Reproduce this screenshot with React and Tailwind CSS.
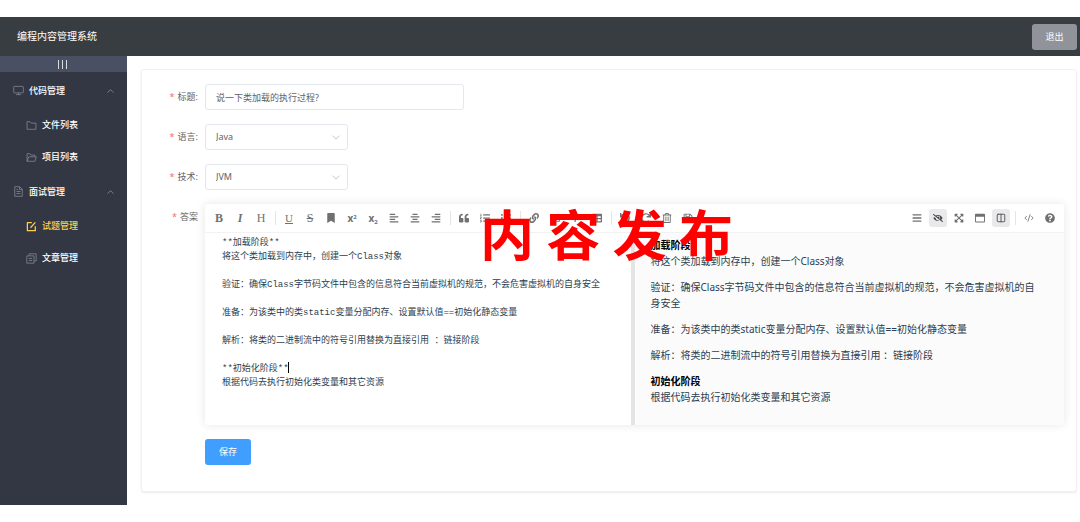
import { useState } from 'react';
import {
    FaBookmark, FaAlignLeft, FaAlignCenter, FaAlignRight, FaQuoteLeft, FaListOl, FaListUl, FaLink,
    FaRegImage, FaCode, FaTable, FaUndo, FaRedo, FaRegTrashAlt, FaRegSave, FaBars, FaEyeSlash,
    FaExpandArrowsAlt, FaRegWindowMaximize, FaQuestionCircle
} from 'react-icons/fa';
import { CodeXml, Columns2 } from 'lucide-react';

const ANSWER = `**加载阶段**
将这个类加载到内存中，创建一个Class对象

验证：确保Class字节码文件中包含的信息符合当前虚拟机的规范，不会危害虚拟机的自身安全

准备：为该类中的类static变量分配内存、设置默认值==初始化静态变量

解析：将类的二进制流中的符号引用替换为直接引用 ：链接阶段

**初始化阶段**
根据代码去执行初始化类变量和其它资源`;

const MENU_ICONS = {
    monitor: <><rect x="1" y="2" width="14" height="9.5" rx="1" /><path d="M8 11.5V14M4.5 14h7" /></>,
    folder: <path d="M1.5 2.5h4.3l1.7 2h7v9h-13z" />,
    folderOpen: <><path d="M1.5 13.5v-11h4.3l1.7 2h5.5V7" /><path d="M1.5 13.5 4 7h11l-2 6.5z" /></>,
    document: <><path d="M2.5 1h7.2L13.5 4.8V15h-11z" /><path d="M9.5 1v4h4M5 5h2.5M5 8h6M5 11h6" /></>,
    edit: <g strokeWidth="1.8"><path d="M8.5 2.5H2v11.5h11.5V7.5" /><path d="M6.5 9.8 13.6 2" /></g>,
    copy: <><path d="M4.5 4V1.2h10.3v10.3H12" /><path d="M1.2 4.2h10.5v10.6H1.2zM4 8h5M4 11h5" /></>
};

const MENU = [
    {
        title: '代码管理', icon: 'monitor',
        items: [{ label: '文件列表', icon: 'folder' }, { label: '项目列表', icon: 'folderOpen' }]
    },
    {
        title: '面试管理', icon: 'document',
        items: [{ label: '试题管理', icon: 'edit', active: true }, { label: '文章管理', icon: 'copy' }]
    }
];

// letter shaped tools are plain serif text
const Bold = () => <span className="text-[12px] font-bold">B</span>;
const Italic = () => <span className="text-[12px] font-bold italic">I</span>;
const Heading = () => <span className="text-[12px]">H</span>;
const Underline = () => <span className="text-[11px] underline">U</span>;
const Strike = () => <span className="text-[12px] line-through">S</span>;
const Sup = () => <span className="font-['Noto_Sans',sans-serif] text-[10px] font-bold">x<sup className="text-[6px]">2</sup></span>;
const Sub = () => <span className="font-['Noto_Sans',sans-serif] text-[10px] font-bold">x<sub className="text-[6px]">2</sub></span>;

const LEFT_TOOLS = [
    [['粗体', Bold], ['斜体', Italic], ['标题', Heading]],
    [['下划线', Underline], ['中划线', Strike], ['标记', FaBookmark], ['上角标', Sup], ['下角标', Sub],
        ['居左', FaAlignLeft], ['居中', FaAlignCenter], ['居右', FaAlignRight]],
    [['段落引用', FaQuoteLeft], ['有序列表', FaListOl], ['无序列表', FaListUl]],
    [['链接', FaLink], ['添加图片', FaRegImage], ['代码块', FaCode], ['表格', FaTable]],
    [['上一步', FaUndo], ['下一步', FaRedo], ['清空', FaRegTrashAlt], ['保存', FaRegSave]]
];

const RIGHT_TOOLS = [
    [['标题导航', FaBars], ['预览', FaEyeSlash, true], ['全屏编辑', FaExpandArrowsAlt], ['沉浸式阅读', FaRegWindowMaximize], ['双栏', Columns2, true]],
    [['查看html文本', CodeXml], ['帮助', FaQuestionCircle]]
];

const MenuIcon = ({ name, className }) => (
    <svg viewBox="0 0 16 16" fill="none" stroke="currentColor" strokeWidth="1.2" strokeLinejoin="round" className={`size-[11px] shrink-0 ${className}`}>
        {MENU_ICONS[name]}
    </svg>
);

const Chevron = ({ className }) => (
    <svg viewBox="0 0 10 6" fill="none" stroke="currentColor" strokeLinecap="round" strokeWidth="1.2" className={className}>
        <path d="M1 1l4 4 4-4" />
    </svg>
);

const Tools = ({ groups }) => (
    <div className="flex items-center gap-[3px] font-['Liberation_Serif',serif] leading-none">
        {groups.map((group, i) => (
            <div key={i} className="flex items-center gap-[3px]">
                {i > 0 && <span className="ml-[2px] mr-px h-[14px] w-px bg-[#e5e5e5]" />}
                {group.map(([label, ToolIcon, active]) => (
                    <button key={label} type="button" aria-label={label} className={`flex h-[18px] w-[18px] items-center justify-center rounded-[3px] ${active ? 'bg-[#e9e9eb] text-[#444]' : 'text-[#707070] hover:bg-[#e9e9eb]'}`}>
                        <ToolIcon size={10} />
                    </button>
                ))}
            </div>
        ))}
    </div>
);

const Field = ({ label, id, children }) => (
    <div className="flex">
        <label htmlFor={id} className="w-[50px] shrink-0 pr-[7px] text-right leading-[26px]">
            <span className="mr-[3px] text-[#f56c6c]">*</span>{label}
        </label>
        <div className="min-w-0 flex-1">{children}</div>
    </div>
);

const SelectBox = ({ id, options }) => (
    <div className="relative w-[143px]">
        <select id={id} className="block h-[26px] w-full appearance-none rounded-[3px] border border-[#e4e7ed] bg-white px-[10px] outline-none focus:border-[#409eff]">
            {options.map(o => <option key={o}>{o}</option>)}
        </select>
        <Chevron className="pointer-events-none absolute right-[8px] top-[11px] h-[5px] w-[8px] text-[#c0c4cc]" />
    </div>
);

const Sidebar = () => (
    <nav className="w-[127px] shrink-0 bg-[#333744] text-white">
        <button type="button" aria-label="折叠菜单" className="flex h-[16px] w-full items-center justify-center gap-[3px] bg-[#4a5064] pr-[3px]">
            <span className="h-[9px] w-px bg-white/80" />
            <span className="h-[9px] w-px bg-white/80" />
            <span className="h-[9px] w-px bg-white/80" />
        </button>
        {MENU.map(group => (
            <div key={group.title}>
                <button type="button" className="flex h-[37px] w-full items-center pl-[13px] pr-[13px]">
                    <MenuIcon name={group.icon} className="mr-[5px] text-[#80848e]" />
                    <span className="font-medium">{group.title}</span>
                    <Chevron className="ml-auto h-[4px] w-[7px] rotate-180 text-[#909399]" />
                </button>
                {group.items.map(item => (
                    <a key={item.label} href="#" className={`flex h-[32px] items-center pl-[26px] ${item.active ? 'text-[#ffd04b]' : 'text-white'}`}>
                        <MenuIcon name={item.icon} className={`mr-[5px] ${item.active ? 'text-[#ffd04b]' : 'text-[#80848e]'}`} />
                        <span className="font-medium">{item.label}</span>
                    </a>
                ))}
            </div>
        ))}
    </nav>
);

const Editor = () => {
    const [value, setValue] = useState(ANSWER);

    return (
        <div className="overflow-hidden rounded-[3px] bg-white shadow-[0_0_10px_rgba(0,0,0,0.1)]">
            <div className="flex h-[29px] items-center justify-between border-b border-[#f2f2f2] px-[5px]">
                <Tools groups={LEFT_TOOLS} />
                <Tools groups={RIGHT_TOOLS} />
            </div>
            <div className="flex min-h-[191px]">
                <div className="relative flex w-1/2 border-r-4 border-[#e4e4e4]">
                    <textarea id="answer" value={value} onChange={e => setValue(e.target.value)} spellCheck={false} className="w-full resize-none bg-white px-[17px] pt-[3px] font-['Liberation_Mono','Noto_Sans_CJK_SC',monospace] leading-[14px] text-[#2c3e50] outline-none" />
                    {/* text cursor */}
                    <span className="absolute left-[83px] top-[129px] h-[11px] w-px bg-black" />
                </div>
                <div className="w-1/2 bg-[#fbfbfb] pb-[20px] pl-[16px] pr-[24px] pt-[4px] text-[10px] leading-[16px] text-[#2c3e50]">
                    <div className="space-y-[10px]">
                        <p><strong className="text-black">加载阶段</strong><br />将这个类加载到内存中，创建一个Class对象</p>
                        <p>验证：确保Class字节码文件中包含的信息符合当前虚拟机的规范，不会危害虚拟机的自身安全</p>
                        <p>准备：为该类中的类static变量分配内存、设置默认值==初始化静态变量</p>
                        <p>解析：将类的二进制流中的符号引用替换为直接引用 ：链接阶段</p>
                        <p><strong className="text-black">初始化阶段</strong><br />根据代码去执行初始化类变量和其它资源</p>
                    </div>
                </div>
            </div>
        </div>
    );
};

export default function App() {
    return (
        <div className="flex min-h-screen flex-col bg-white py-[17px] font-['Noto_Sans','Noto_Sans_CJK_SC',sans-serif] text-[9px] text-[#606266]">
            <header className="flex h-[39px] items-center justify-between bg-[#373d41] pl-[17px] pr-[3px]">
                <h1 className="text-[10px] text-white">编程内容管理系统</h1>
                <button type="button" className="h-[26px] w-[45px] rounded-[3px] bg-[#909399] text-white">退出</button>
            </header>

            <div className="flex flex-1">
                <Sidebar />
                <main className="relative flex min-w-0 flex-1 pb-[13px] pl-[14px] pr-[3px] pt-[13px]">
                    <form onSubmit={e => e.preventDefault()} className="flex min-w-0 flex-1 flex-col gap-[14px] rounded-[3px] border border-[#f0f2f7] bg-white py-[14px] pl-[13px] pr-[12px] shadow-[0_1px_2px_rgba(0,0,0,0.08)]">
                        <Field label="标题:" id="title">
                            <input id="title" type="text" defaultValue="说一下类加载的执行过程?" className="block h-[26px] w-full max-w-[259px] rounded-[3px] border border-[#e4e7ed] px-[10px] outline-none focus:border-[#409eff]" />
                        </Field>
                        <Field label="语言:" id="language">
                            <SelectBox id="language" options={['Java', 'Python', 'Go']} />
                        </Field>
                        <Field label="技术:" id="tech">
                            <SelectBox id="tech" options={['JVM', 'Spring', 'MySQL']} />
                        </Field>
                        <Field label="答案" id="answer">
                            <Editor />
                        </Field>
                        <div className="pl-[50px]">
                            <button type="submit" className="h-[26px] w-[46px] rounded-[3px] bg-[#409eff] text-white">保存</button>
                        </div>
                    </form>

                    {/* watermark over the editor */}
                    <div className="pointer-events-none absolute inset-x-0 top-[149px] pl-[6px] text-center font-['Noto_Sans_CJK_SC',sans-serif] text-[54px] font-bold leading-[56px] text-[#ff0000]">内 容 发 布</div>
                </main>
            </div>
        </div>
    );
}
